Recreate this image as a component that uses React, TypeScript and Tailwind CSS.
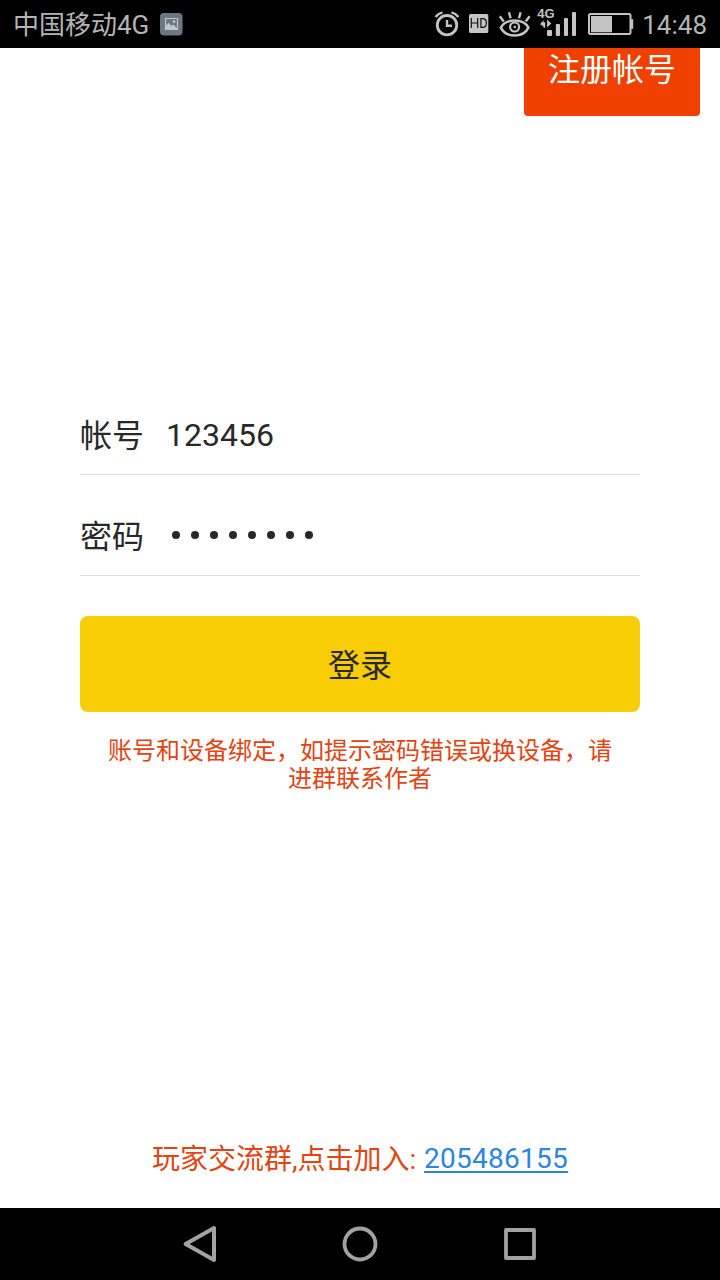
import React from "react";

const FONT = "font-['Roboto','Noto_Sans_CJK_SC',sans-serif]";

function StatusIcons() {
  return (
    <svg width="200" height="48" viewBox="434 0 200 48" fill="none" stroke="#c4c4c4" className="block shrink-0">
      <circle cx="447" cy="25.2" r="9.7" strokeWidth="2.8" />
      <path d="M435.6 17Q438 13.6 442.5 12.4M458.4 17Q456 13.6 451.5 12.4" strokeWidth="2.5" />
      <path d="M447 20v5.8h5" strokeWidth="2.4" />
      <rect x="469" y="14" width="19.3" height="19" rx="1.5" fill="#c4c4c4" stroke="none" />
      <path d="M471.3 18v10M477.7 18v10M471.3 23h6.4M480.9 18.6v8.8h1.8q3.7 0 3.7-4.4t-3.7-4.4z" stroke="#111" strokeWidth="1.2" />
      <path d="M500.8 27.6C503.5 22.8 508 20.6 514.6 20.6S525.7 22.8 528.4 27.6C525.7 33.2 521 35.5 514.6 35.5S503.5 33.2 500.8 27.6Z" strokeWidth="2.5" />
      <circle cx="514.6" cy="27" r="4.5" strokeWidth="2.2" />
      <circle cx="514.8" cy="27" r="1.3" fill="#c4c4c4" stroke="none" />
      <path d="M499.8 16.3l3.9 5.2M509 12.3l1.6 6M520.6 12.3l-1.6 6M529.6 16.3l-3.9 5.2" strokeWidth="2.4" />
      <text x="537.3" y="17.7" fill="#c4c4c4" stroke="none" className="font-['Liberation_Sans',sans-serif] text-[13px] font-bold">4G</text>
      <g fill="#c4c4c4" stroke="none">
        <path d="M540 24.3l3.6-4v2h1.6v5.4h-1.8v-1.4zM551.3 23.6l-4.2-4v8z" />
        <rect x="547" y="30" width="5" height="6" rx="1" />
        <rect x="555.8" y="24" width="4.2" height="12" rx="1" />
        <rect x="564" y="18" width="4" height="18" rx="1" />
        <rect x="572" y="12" width="4" height="24" rx="1" />
        <rect x="591" y="16" width="21" height="16.3" />
        <rect x="631" y="19" width="2.2" height="10" rx="1" />
      </g>
      <rect x="589" y="14" width="41.5" height="20" rx="1.5" strokeWidth="2" />
    </svg>
  );
}

function StatusBar() {
  return (
    <header className="flex h-12 shrink-0 items-center bg-black pl-[13px] pr-[13px] text-[26px] leading-[48px] text-[#b4b4b4]">
      <span className="w-[147px] whitespace-nowrap pt-[2px]">中国移动4G</span>
      <svg width="23" height="23" viewBox="0 0 23 23" className="block">
        <rect width="22.5" height="22.5" rx="4" fill="#6c7781" />
        <path d="M5.5 5.5h12v11h-12z" fill="none" stroke="#c0c5c9" strokeWidth="1.2" />
        <path d="M5.5 13l3-3.3 3 3 1.7-1.2 4.3 4.3v1.2h-12z" fill="#c0c5c9" />
        <circle cx="14" cy="8.7" r="1.4" fill="#c0c5c9" />
      </svg>
      <div className="ml-auto flex items-center gap-[8px]">
        <StatusIcons />
        <span className="whitespace-nowrap pt-[2px]">14:48</span>
      </div>
    </header>
  );
}

function Field({ label, children }: { label: string; children: React.ReactNode }) {
  return (
    <div className="flex h-[101px] items-center border-b border-[#dddddd] pt-[21px] text-[32px] leading-[48px]">
      <span className="w-[86px] whitespace-nowrap pt-[2px]">{label}</span>
      {children}
    </div>
  );
}

export default function App() {
  return (
    <div className={`flex h-[1280px] w-[720px] flex-col overflow-hidden bg-white text-[#272929] ${FONT}`}>
      <StatusBar />
      <main className="flex min-h-0 flex-1 flex-col">
        <button className="mr-5 flex h-[68px] w-[176px] shrink-0 justify-center self-end rounded-b-[4px] bg-[#f04000] text-[32px] leading-[45px] text-white">
          注册帐号
        </button>
        <form className="mx-20 mt-[258px] flex flex-col">
          <Field label="帐号">
            <span>123456</span>
          </Field>
          <Field label="密码">
            <span className="mb-[2px] flex gap-[11px] pl-[5.5px]">
              {Array.from({ length: 8 }, (_, i) => (
                <i key={i} className="h-[8px] w-[8px] rounded-full bg-[#272929]" />
              ))}
            </span>
          </Field>
          <button type="button" className="mt-10 h-24 rounded-[8px] bg-[#f9cd05] pt-[4px] text-[32px] leading-[48px]">
            登录
          </button>
        </form>
        <p className="mx-[100px] mt-[25px] text-center text-[24px] leading-[28px] text-[#e64310]">
          账号和设备绑定，如提示密码错误或换设备，请进群联系作者
        </p>
        <p className="mb-[28px] mt-auto flex items-start whitespace-pre pl-[152px] text-[28px] leading-[40px] text-[#e64310]">
          <span>{"玩家交流群,点击加入: "}</span>
          <a className="-mt-px ml-[0.8px] tracking-[0.27px] text-[#2a86e2] underline decoration-2 underline-offset-[3px]">205486155</a>
        </p>
      </main>
      <nav className="flex h-[72px] shrink-0 items-center justify-center gap-[124px] bg-black">
        <svg width="36" height="40" viewBox="0 0 36 40" fill="none" stroke="#a2a2a2" strokeWidth="4" strokeLinejoin="round">
          <path d="M3.6 20L32 4v32z" />
        </svg>
        <svg width="36" height="36" viewBox="0 0 36 36" fill="none" stroke="#a2a2a2" strokeWidth="3.8">
          <circle cx="18" cy="18" r="15.5" />
        </svg>
        <svg width="36" height="36" viewBox="0 0 36 36" fill="none" stroke="#a2a2a2" strokeWidth="3.8" strokeLinejoin="round">
          <path d="M4 4h28v28H4z" />
        </svg>
      </nav>
    </div>
  );
}
